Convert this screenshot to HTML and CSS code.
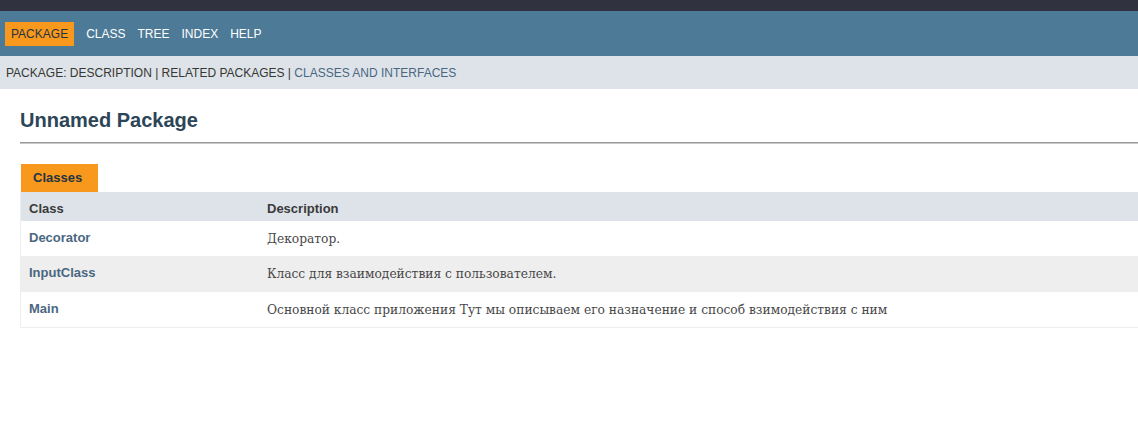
FILE: index.html
```html
<!DOCTYPE html>
<html>
<head>
<meta charset="utf-8">
<link rel="stylesheet" href="styles.css">
</head>
<body>
<div class="topstrip"></div>
<nav class="nav">
  <span class="nav-item active">PACKAGE</span>
  <span class="nav-item">CLASS</span>
  <span class="nav-item">TREE</span>
  <span class="nav-item">INDEX</span>
  <span class="nav-item">HELP</span>
</nav>
<div class="subnav">PACKAGE: DESCRIPTION | RELATED PACKAGES | <span class="sublink">CLASSES AND INTERFACES</span></div>
<main class="main">
  <h1 class="title">Unnamed Package</h1>
  <hr class="rule">
  <div class="caption">Classes</div>
  <div class="table">
    <div class="cell head">Class</div>
    <div class="cell head">Description</div>
    <div class="cell name">Decorator</div>
    <div class="cell desc">Декоратор.</div>
    <div class="cell name alt">InputClass</div>
    <div class="cell desc alt">Класс для взаимодействия с пользователем.</div>
    <div class="cell name">Main</div>
    <div class="cell desc">Основной класс приложения Тут мы описываем его назначение и способ взимодействия с ним</div>
  </div>
</main>
</body>
</html>
```
FILE: styles.css
```css
* { box-sizing: border-box; }
body {
  margin: 0;
  font-family: "Liberation Sans", Arial, sans-serif;
  color: #353833;
  background: #fff;
}
.topstrip { height: 11px; background: #30333f; }
.nav {
  height: 45px;
  background: #4d7a97;
  display: flex;
  align-items: center;
  padding-left: 5px;
}
.nav-item {
  color: #fff;
  font-size: 12px;
  padding: 5px 6px;
}
.nav-item.active {
  background: #f8981d;
  color: #253441;
  margin-right: 6px;
}
.subnav {
  height: 33px;
  background: #dee3e9;
  font-size: 12px;
  padding-left: 6px;
  display: flex;
  align-items: center;
  white-space: pre;
}
.sublink { color: #4a6782; }
.main { padding-left: 20px; }
.title {
  margin: 0;
  padding-top: 20px;
  font-size: 20px;
  line-height: 23px;
  color: #2c4557;
  font-weight: bold;
  height: 53px;
}
.rule {
  margin: 0;
  border: 0;
  border-top: 1px solid #999;
  height: 1px;
  border-bottom: 1px solid #c8c8c8;
}
.caption {
  margin-top: 20px;
  margin-left: 1px;
  display: inline-block;
  background: #f8981d;
  color: #253441;
  font-weight: bold;
  font-size: 13px;
  height: 28px;
  line-height: 28px;
  padding: 0 16px 0 12px;
}
.table {
  display: grid;
  grid-template-columns: 238px 1fr;
  border-left: 1px solid #eee;
  border-bottom: 1px solid #eee;
}
.cell { padding: 0 8px; display: flex; align-items: center; }
.head {
  background: #dee3e9;
  font-weight: bold;
  font-size: 13px;
  height: 29px;
  color: #3a3a3a;
  padding-top: 3px;
}
.name {
  height: 35px;
  font-weight: bold;
  font-size: 13px;
  color: #4a6782;
  align-items: flex-start;
  padding-top: 9px;
}
.desc {
  height: 35px;
  font-family: "DejaVu Serif Condensed", "DejaVu Serif", Georgia, serif;
  font-stretch: condensed;
  font-size: 13.6px;
  color: #474747;
  align-items: flex-start;
  padding-top: 9px;
}
.alt { background: #eeeeee; height: 36px; }
```
